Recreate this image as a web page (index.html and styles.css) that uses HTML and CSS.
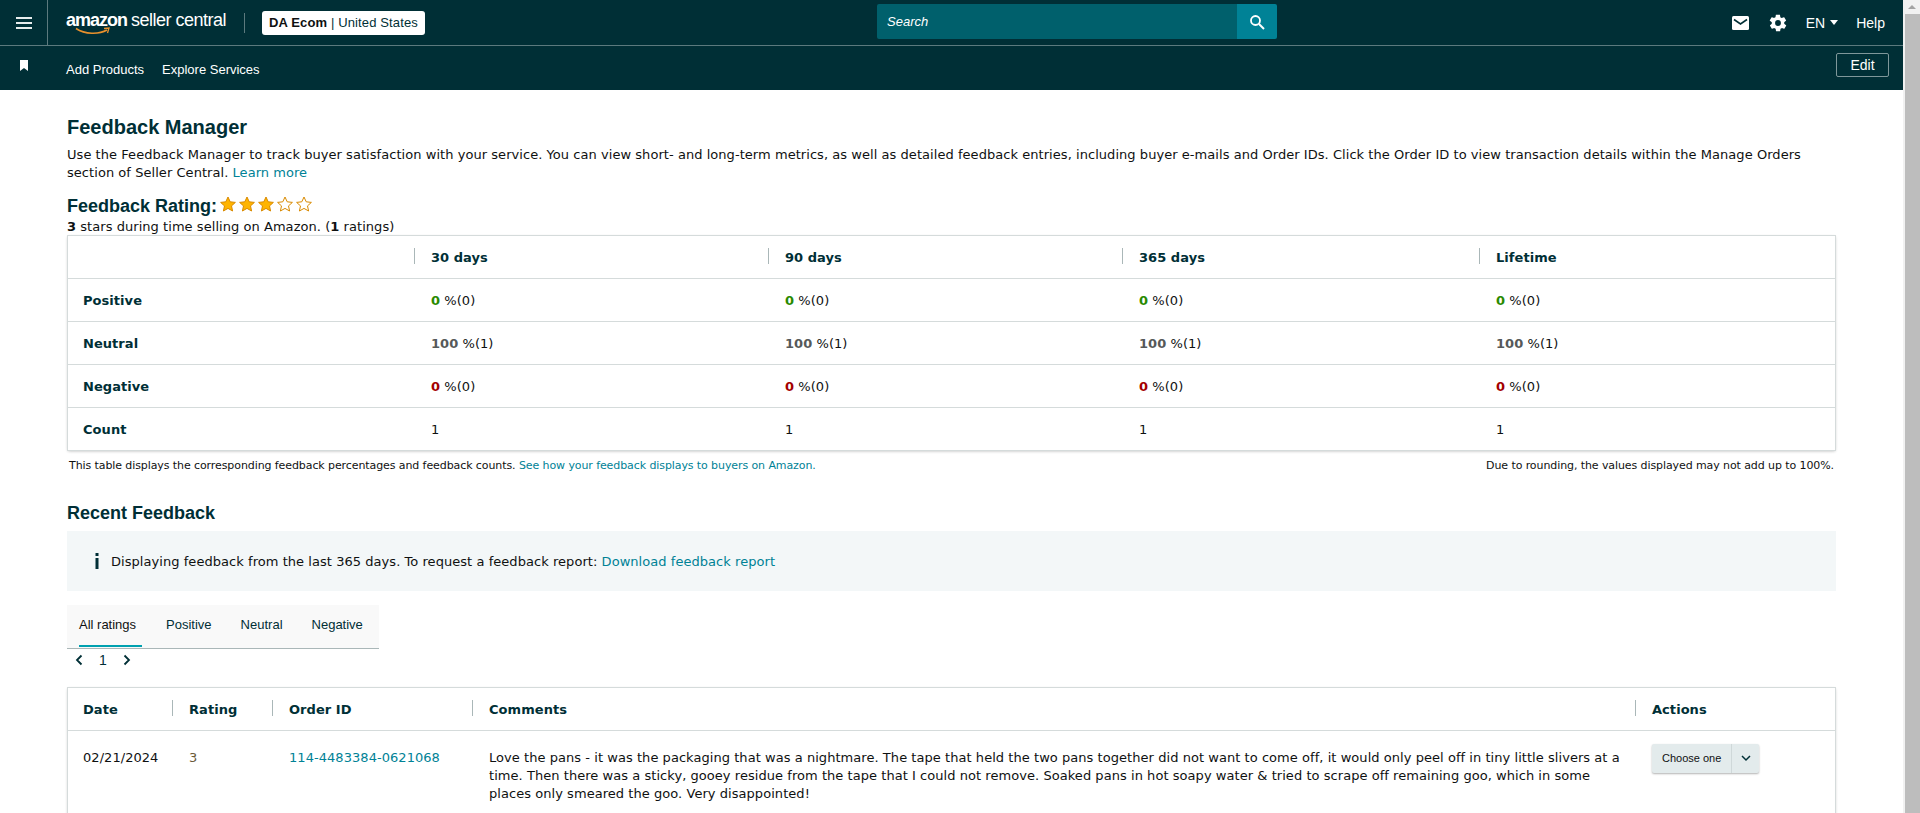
FILE: index.html
```html
<!DOCTYPE html>
<html lang="en">
<head>
    <meta charset="UTF-8">
    <title>Feedback Manager</title>
    <link rel="stylesheet" href="styles.css">
</head>
<body>
<div class="page">
    <div class="main">
        <header class="top-bar">
            <div class="menu-cell">
                <svg width="16" height="12" viewBox="0 0 16 12"><path d="M0 1h16M0 6h16M0 11h16" stroke="#e6ecec" stroke-width="2"/></svg>
            </div>
            <div class="logo">
                <span class="logo-amazon">amazon</span><span class="logo-seller">seller central</span>
                <svg class="logo-smile" width="36" height="9" viewBox="0 0 36 9"><path d="M1 1.500C10 7.500 24 7.500 32 3" stroke="#e8912d" stroke-width="1.600" fill="none"/><path d="M29 1.500l5-.5-1.500 5" stroke="#e8912d" stroke-width="1.300" fill="none"/></svg>
            </div>
            <div class="logo-sep"></div>
            <div class="account"><b>DA Ecom</b> | United States</div>
            <div class="search">
                <div class="search-input">Search</div>
                <div class="search-btn">
                    <svg width="16" height="16" viewBox="0 0 16 16"><circle cx="6.500" cy="6.500" r="4.500" stroke="#fff" stroke-width="1.800" fill="none"/><path d="M10 10l5 5" stroke="#fff" stroke-width="2"/></svg>
                </div>
            </div>
            <div class="top-right">
                <svg width="17" height="14" viewBox="0 0 17 14"><rect width="17" height="14" rx="1.500" fill="#fff"/><path d="M2 3.500l6.500 4.500 6.500-4.500" stroke="#002f36" stroke-width="1.600" fill="none"/></svg>
                <svg class="gear" width="20" height="20" viewBox="0 0 24 24"><path fill="#fff" d="M19.400 13c.1-.3.1-.7.1-1s0-.7-.1-1l2.100-1.600c.2-.2.2-.4.1-.6l-2-3.500c-.1-.2-.4-.3-.6-.2l-2.500 1c-.5-.4-1.100-.7-1.700-1l-.4-2.600c0-.3-.2-.5-.5-.5h-4c-.3 0-.5.2-.5.400l-.4 2.700c-.6.2-1.200.6-1.700 1l-2.500-1c-.2-.1-.5 0-.6.2l-2 3.500c-.1.2-.1.400.1.600L4.600 11c0 .3-.1.700-.1 1s0 .7.1 1l-2.100 1.600c-.2.2-.2.400-.1.600l2 3.500c.1.200.4.300.6.200l2.500-1c.5.400 1.100.7 1.700 1l.4 2.600c0 .3.2.5.5.5h4c.3 0 .5-.2.5-.4l.4-2.700c.6-.2 1.200-.6 1.700-1l2.500 1c.2.100.5 0 .6-.2l2-3.500c.1-.2.1-.4-.1-.6zM12 15.500a3.500 3.500 0 1 1 0-7 3.500 3.500 0 0 1 0 7z"/></svg>
                <span class="lang">EN<i class="caret"></i></span>
                <span class="help">Help</span>
            </div>
        </header>
        <nav class="sub-bar">
            <svg class="bookmark" width="8" height="11" viewBox="0 0 8 11"><path d="M0 0h8v11L4 8l-4 3z" fill="#fff"/></svg>
            <a class="sub-link">Add Products</a>
            <a class="sub-link">Explore Services</a>
            <button class="edit-btn">Edit</button>
        </nav>

        <div class="content">
            <h1>Feedback Manager</h1>
            <p class="intro">Use the Feedback Manager to track buyer satisfaction with your service. You can view short- and long-term metrics, as well as detailed feedback entries, including buyer e-mails and Order IDs. Click the Order ID to view transaction details within the Manage Orders section of Seller Central. <a>Learn more</a></p>

            <div class="rating-title">
                <h2>Feedback Rating:</h2>
                <svg class="stars" width="94" height="18" viewBox="0 0 94 18">
                    <defs><path id="star" d="M8 1l2.200 4.800 5.200.6-3.900 3.500 1.100 5.100L8 12.400 3.400 15l1.100-5.100L.6 6.400l5.200-.6z"/></defs>
                    <use href="#star" x="0" fill="#ffb400" stroke="#d98a00"/>
                    <use href="#star" x="19" fill="#ffb400" stroke="#d98a00"/>
                    <use href="#star" x="38" fill="#ffb400" stroke="#d98a00"/>
                    <use href="#star" x="57" fill="#fff" stroke="#d98a00"/>
                    <use href="#star" x="76" fill="#fff" stroke="#d98a00"/>
                </svg>
            </div>
            <div class="rating-sub"><b>3</b> stars during time selling on Amazon. (<b>1</b> ratings)</div>

            <table class="card-table summary">
                <colgroup><col class="c-label"><col class="c-30"><col class="c-90"><col class="c-365"><col></colgroup>
                <thead>
                    <tr><th></th><th class="sep">30 days</th><th class="sep">90 days</th><th class="sep">365 days</th><th class="sep">Lifetime</th></tr>
                </thead>
                <tbody>
                    <tr><th>Positive</th><td><b class="good">0</b> %(0)</td><td><b class="good">0</b> %(0)</td><td><b class="good">0</b> %(0)</td><td><b class="good">0</b> %(0)</td></tr>
                    <tr><th>Neutral</th><td><b class="neutral">100</b> %(1)</td><td><b class="neutral">100</b> %(1)</td><td><b class="neutral">100</b> %(1)</td><td><b class="neutral">100</b> %(1)</td></tr>
                    <tr><th>Negative</th><td><b class="bad">0</b> %(0)</td><td><b class="bad">0</b> %(0)</td><td><b class="bad">0</b> %(0)</td><td><b class="bad">0</b> %(0)</td></tr>
                    <tr><th>Count</th><td>1</td><td>1</td><td>1</td><td>1</td></tr>
                </tbody>
            </table>
            <div class="table-note">
                <span>This table displays the corresponding feedback percentages and feedback counts. <a>See how your feedback displays to buyers on Amazon.</a></span>
                <span>Due to rounding, the values displayed may not add up to 100%.</span>
            </div>

            <h2 class="recent">Recent Feedback</h2>
            <div class="info-box">
                <svg width="6" height="16" viewBox="0 0 6 16"><path d="M1.500 0h3v3h-3zM1.500 5h3v11h-3z" fill="#002f36"/></svg>
                <span>Displaying feedback from the last 365 days. To request a feedback report: <a>Download feedback report</a></span>
            </div>

            <div class="tabs">
                <div class="tab active">All ratings</div>
                <div class="tab">Positive</div>
                <div class="tab">Neutral</div>
                <div class="tab">Negative</div>
            </div>
            <div class="pager">
                <svg width="8" height="12" viewBox="0 0 8 12"><path d="M6.500 1.500L2 6l4.500 4.500" stroke="#002f36" stroke-width="1.800" fill="none"/></svg>
                <span>1</span>
                <svg width="8" height="12" viewBox="0 0 8 12"><path d="M1.500 1.500L6 6l-4.500 4.500" stroke="#002f36" stroke-width="1.800" fill="none"/></svg>
            </div>

            <table class="card-table feedback">
                <colgroup><col class="f-date"><col class="f-rating"><col class="f-order"><col class="f-comments"><col></colgroup>
                <thead>
                    <tr><th>Date</th><th class="sep">Rating</th><th class="sep">Order ID</th><th class="sep">Comments</th><th class="sep">Actions</th></tr>
                </thead>
                <tbody>
                    <tr>
                        <td>02/21/2024</td>
                        <td class="rating-cell">3</td>
                        <td><a>114-4483384-0621068</a></td>
                        <td class="comment">Love the pans - it was the packaging that was a nightmare. The tape that held the two pans together did not want to come off, it would only peel off in tiny little slivers at a time. Then there was a sticky, gooey residue from the tape that I could not remove. Soaked pans in hot soapy water &amp; tried to scrape off remaining goo, which in some places only smeared the goo. Very disappointed!</td>
                        <td>
                            <div class="choose">
                                <span class="choose-label">Choose one</span>
                                <span class="choose-arrow"><svg width="10" height="7" viewBox="0 0 10 7"><path d="M1 1l4 4 4-4" stroke="#002f36" stroke-width="1.500" fill="none"/></svg></span>
                            </div>
                        </td>
                    </tr>
                </tbody>
            </table>
        </div>
    </div>
    <div class="scrollbar">
        <div class="scroll-arrow"></div>
        <div class="scroll-thumb"></div>
    </div>
</div>
</body>
</html>
```

FILE: styles.css
```css
html, body {
    margin: 0;
    height: 100%;
    overflow: hidden;
}
body {
    font-family: "DejaVu Sans", Verdana, sans-serif;
    font-size: 13px;
    letter-spacing: 0.05px;
    color: #0f1111;
    background: #fff;
}
a {
    color: #008296;
}
.page {
    display: flex;
    height: 813px;
}
.main {
    flex: 1;
    min-width: 0;
    overflow: hidden;
}

/* top navigation */
.top-bar {
    display: flex;
    align-items: center;
    height: 45px;
    background: #002f36;
    border-bottom: 1px solid #5c7a7e;
    font-family: "Liberation Sans", Arial, sans-serif;
    letter-spacing: 0;
    color: #fff;
    position: relative;
}
.menu-cell {
    width: 47px;
    height: 45px;
    border-right: 1px solid #5c7a7e;
    display: flex;
    align-items: center;
    justify-content: center;
    flex: none;
}
.logo {
    position: relative;
    margin-left: 18px;
    width: 165px;
    white-space: nowrap;
    color: #fff;
    line-height: 20px;
    top: -2px;
}
.logo-amazon {
    font-size: 18px;
    font-weight: bold;
    letter-spacing: -1px;
}
.logo-seller {
    font-size: 18px;
    margin-left: 4px;
    letter-spacing: -0.5px;
    font-weight: normal;
}
.logo-smile {
    position: absolute;
    left: 9px;
    top: 17px;
}
.logo-sep {
    width: 1px;
    height: 20px;
    background: #5c7a7e;
    margin-left: 13px;
}
.account {
    margin-left: 17px;
    height: 24px;
    line-height: 24px;
    padding: 0 7px;
    background: #fff;
    color: #002f36;
    border-radius: 3px;
    font-size: 13px;
    letter-spacing: 0.13px;
    white-space: nowrap;
}
.account b {
    color: #0f1111;
}
.search {
    position: absolute;
    left: 877px;
    top: 4px;
    width: 400px;
    height: 35px;
    display: flex;
}
.search-input {
    flex: 1;
    background: #00606c;
    color: #fff;
    font-style: italic;
    font-size: 13px;
    line-height: 35px;
    padding-left: 10px;
    border-radius: 2px 0 0 2px;
}
.search-btn {
    width: 40px;
    background: #008296;
    display: flex;
    align-items: center;
    justify-content: center;
    border-radius: 0 2px 2px 0;
}
.top-right {
    margin-left: auto;
    display: flex;
    align-items: center;
    font-size: 14px;
    padding-right: 18px;
}
.gear {
    margin-left: 19px;
}
.lang {
    margin-left: 18px;
    display: flex;
    align-items: center;
}
.caret {
    margin-left: 5px;
    border-left: 4px solid transparent;
    border-right: 4px solid transparent;
    border-top: 5px solid #fff;
}
.help {
    margin-left: 18px;
}
.sub-bar {
    display: flex;
    align-items: center;
    height: 44px;
    background: #002f36;
    font-family: "Liberation Sans", Arial, sans-serif;
    letter-spacing: 0;
    color: #fff;
    font-size: 13px;
}
.bookmark {
    margin-left: 20px;
    margin-right: 38px;
    margin-top: -6px;
}
.sub-link {
    color: #fff;
    margin-right: 18px;
    padding-top: 2px;
}
.edit-btn {
    margin-left: auto;
    margin-right: 14px;
    width: 53px;
    height: 24px;
    padding: 0;
    margin-top: -6px;
    background: transparent;
    color: #fff;
    border: 1px solid #7f979a;
    border-radius: 2px;
    font-family: inherit;
    font-size: 14px;
}

/* page content */
.content {
    padding: 25px 67px 0;
    width: 1769px;
}
h1 {
    margin: 0;
    font-family: "Liberation Sans", Arial, sans-serif;
    font-size: 20px;
    line-height: 24px;
    letter-spacing: 0;
    color: #002f36;
}
.intro {
    margin: 7px 0 0;
    line-height: 18px;
    color: #0f1111;
}
.rating-title {
    display: flex;
    align-items: center;
    margin-top: 12px;
    height: 24px;
}
h2 {
    margin: 0;
    font-family: "Liberation Sans", Arial, sans-serif;
    font-size: 18px;
    line-height: 24px;
    letter-spacing: 0;
    color: #002f36;
}
.stars {
    margin-left: 3px;
    margin-top: -3px;
}
.rating-sub {
    line-height: 16px;
    margin-top: 1px;
}
.card-table {
    width: calc(100% - 2px);
    table-layout: fixed;
    border-collapse: collapse;
    background: #fff;
    box-shadow: 0 0 0 1px #d5dbdb, 0 1px 3px rgba(0, 0, 0, 0.3);
}
.card-table th, .card-table td {
    height: 42px;
    padding: 0 0 0 15px;
    text-align: left;
    border-top: 1px solid #d5dbdb;
    vertical-align: middle;
}
.card-table thead th {
    border-top: none;
    color: #002f36;
    position: relative;
}
.card-table tbody th {
    color: #002f36;
}
.sep::before {
    content: "";
    position: absolute;
    left: -2px;
    top: 12px;
    height: 16px;
    width: 1px;
    background: #aab7b8;
}
.summary {
    margin: 1px 1px 0;
}
.c-label { width: 348px; }
.c-30 { width: 354px; }
.c-90 { width: 354px; }
.c-365 { width: 357px; }
.good { color: #2a8a00; }
.neutral { color: #565959; }
.bad { color: #a40000; }
.table-note {
    display: flex;
    justify-content: space-between;
    font-size: 11px;
    letter-spacing: -0.09px;
    line-height: 14px;
    margin: 9px 2px 0;
}
.recent {
    margin-top: 28px;
    font-size: 18px;
}
.info-box {
    display: flex;
    align-items: center;
    height: 60px;
    margin-top: 6px;
    padding-left: 27px;
    background: #f3f7f8;
    gap: 11px;
}
.tabs {
    display: flex;
    width: 312px;
    height: 43px;
    margin-top: 14px;
    background: #f9f9f9;
    border-bottom: 1px solid #aab7b8;
    font-family: "Liberation Sans", Arial, sans-serif;
    font-size: 13px;
    letter-spacing: 0;
    color: #002f36;
}
.tab {
    margin-left: 29px;
    padding: 12px 0 0;
    height: 28px;
}
.tab.active {
    margin-left: 12px;
    margin-right: -5px;
    padding-right: 6px;
    color: #0f1111;
    border-bottom: 2px solid #00a1b0;
}
.pager {
    display: flex;
    align-items: center;
    height: 22px;
    padding-left: 8px;
    gap: 16px;
    font-family: "Liberation Sans", Arial, sans-serif;
    font-size: 14px;
    letter-spacing: 0;
    color: #002f36;
}
.feedback {
    margin: 17px 1px 0;
}
.f-date { width: 106px; }
.f-rating { width: 100px; }
.f-order { width: 200px; }
.f-comments { width: 1163px; }
.feedback tbody td {
    vertical-align: top;
    padding-top: 18px;
    padding-bottom: 18px;
    line-height: 18px;
}
.rating-cell {
    color: #6b5a3a;
}
.comment {
    padding-right: 12px !important;
}
.choose {
    display: inline-flex;
    height: 29px;
    margin-top: -6px;
    background: #e3ebec;
    border-radius: 2px;
    box-shadow: 0 1px 2px rgba(0, 0, 0, 0.3);
    font-family: "Liberation Sans", Arial, sans-serif;
    font-size: 11px;
    letter-spacing: 0;
    color: #0f1111;
    align-items: center;
}
.choose-label {
    padding: 0 10px;
    line-height: 29px;
    border-right: 1px solid #cfd8d9;
}
.choose-arrow {
    width: 27px;
    display: flex;
    justify-content: center;
}

/* fake scrollbar, the real one does not show in the capture */
.scrollbar {
    width: 17px;
    flex: none;
    background: #f1f1f1;
    position: relative;
}
.scroll-arrow {
    position: absolute;
    left: 5px;
    top: 5px;
    border-left: 4px solid transparent;
    border-right: 4px solid transparent;
    border-bottom: 4px solid #a3a3a3;
}
.scroll-thumb {
    position: absolute;
    left: 2px;
    right: 0;
    top: 14px;
    height: 799px;
    background: #bdbdbd;
}
```
